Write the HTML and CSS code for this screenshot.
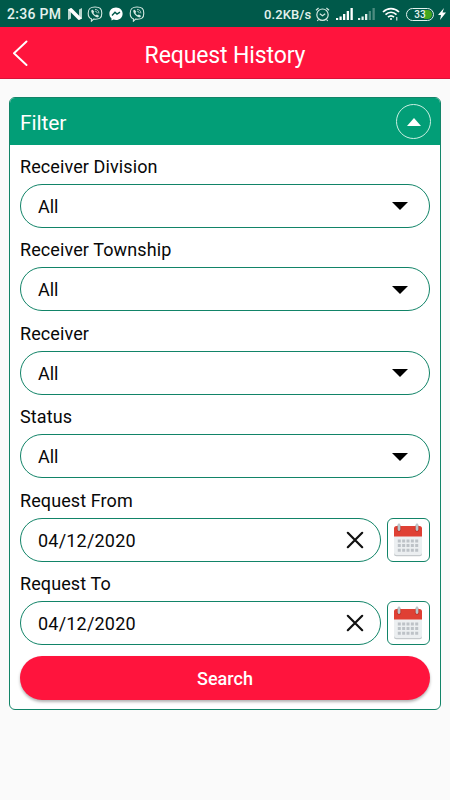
FILE: index.html
```html
<!DOCTYPE html>
<html lang="en">
<head>
<meta charset="utf-8">
<title>Request History</title>
<link rel="stylesheet" href="styles.css">
</head>
<body>
<svg class="defs" width="0" height="0" aria-hidden="true">
  <defs>
    <symbol id="viber" viewBox="0 0 16 16">
      <path d="M8 1C3 1 1.200 2.600 1.200 7.200c0 3.400 1 4.900 3.200 5.600v2.400l2.200-2.100c6.100.5 8.200-1 8.200-5.900C14.800 2.600 13 1 8 1z" fill="none" stroke="#d5e9e2" stroke-width="1.100"/>
      <path d="M4.600 4.100l1.200-.4 1.400 2-.8 1.200c.5 1.200 1.300 2 2.400 2.400l1.100-.9 2 1.400c0 .9-.8 1.600-1.600 1.700C7.300 10.600 4.700 7.900 4.200 5.300z" fill="#d5e9e2"/>
      <path d="M8 3.400c2.300 0 3.900 1.500 3.900 4M8.200 5.200c1.200.1 1.900.8 2 2" fill="none" stroke="#d5e9e2" stroke-width=".8"/>
    </symbol>
    <symbol id="cal" viewBox="0 0 30 34">
      <rect x="1" y="5" width="28" height="28.300" rx="2.500" fill="#c5c9cc"/>
      <rect x="1" y="5" width="28" height="27" rx="2.500" fill="#eceff1"/>
      <path d="M1 13.500V5.500a2.500 2.500 0 0 1 2.500-2.500h23A2.500 2.500 0 0 1 29 5.500v8z" fill="#df4034"/>
      <path d="M6 4.500V6.500M24 4.500V6.500" stroke="#bd3026" stroke-width="4.400" stroke-linecap="round"/>
      <path d="M6 2V6.500M24 2V6.500" stroke="#bcc5c9" stroke-width="2.800" stroke-linecap="round"/>
      <path d="M4.800 18h20.400M4.800 22.600h20.400M4.800 27.200h20.400" stroke="#bdc2c7" stroke-width="3" stroke-dasharray="3 1.350"/>
    </symbol>
    <symbol id="cross" viewBox="0 0 18 18">
      <path d="M1.800 1.800l14.400 14.400M16.200 1.800L1.800 16.200" stroke="#111" stroke-width="2.200" stroke-linecap="round"/>
    </symbol>
    <symbol id="down" viewBox="0 0 16 8"><path d="M0 0h16L8 8z"/></symbol>
  </defs>
</svg>

<header class="status">
  <span class="clock">2:36 PM</span>
  <svg class="n-icon" width="14" height="12" viewBox="0 0 14 12"><path d="M0 1.500L3 0v10.500L0 12zM11 1.500L14 0v10.500L11 12z" fill="#b9d6ce"/><path d="M0 1.500L3.500 0 14 10.500 10.500 12z" fill="#fff"/></svg>
  <svg class="viber-a" width="16" height="16"><use href="#viber"/></svg>
  <svg class="chat" width="14" height="14" viewBox="0 0 14 14"><path d="M7 .4C3 .4.400 3.200.400 6.700c0 2 .8 3.600 2.100 4.700v2.200l2-1c.8.3 1.600.4 2.500.4 4 0 6.600-2.800 6.600-6.300S11 .4 7 .4z" fill="#fff"/><path d="M3 8.500l3-3.200 2 1.800 3-1.900" fill="none" stroke="#00594a" stroke-width="1.400"/></svg>
  <svg class="viber-b" width="16" height="16"><use href="#viber"/></svg>
  <span class="rate">0.2KB/s</span>
  <svg class="alarm" width="15" height="15" viewBox="0 0 15 15" fill="none" stroke="#d5e9e2" stroke-width="1.200"><circle cx="7.500" cy="7.700" r="5.700"/><path d="M1 3.300L3.600 1M14 3.300L11.400 1M3.500 12.500L2.300 14M11.500 12.500l1.200 1.500M4.800 6.700l2.700 2 2.700-2"/></svg>
  <svg class="signal" width="17" height="12" viewBox="0 0 17 12" fill="#fff"><path d="M0 10h2.200v2H0zM3.500 8.500h2.200V12H3.500zM7 6h2.300v6H7zM10.700 3H13v9h-2.300zM14.500 0h2.300v12h-2.300z"/></svg>
  <svg class="signal-b" width="17" height="12" viewBox="0 0 17 12" fill="#e4f2ee"><path d="M0 10h2.200v2H0zM3.500 8.500h2.200V12H3.500zM7 6h2.300v6H7z"/><path d="M10.700 3H13v9h-2.300zM14.500 0h2.300v12h-2.300z" fill="#4d8c80"/></svg>
  <svg class="wifi" width="18" height="14" viewBox="0 0 18 14" fill="none" stroke="#fff" stroke-width="1.700"><path d="M1 5c4.700-4.600 11.300-4.600 16 0M3.500 7.700c3.300-3.200 7.700-3.200 11 0M6 10.200c1.900-1.800 4.100-1.800 6 0"/><circle cx="9" cy="12" r="1" fill="#fff" stroke="none"/><path d="M14.800 10v3.500" stroke-width="1"/></svg>
  <span class="battery">33</span>
  <svg class="bolt" width="8" height="12" viewBox="0 0 8 12"><path d="M6 0L0 7h3L2 12l6-7.500H4.500z" fill="#fff"/></svg>
</header>

<nav class="bar">
  <svg class="back" width="16" height="27" viewBox="0 0 16 27"><path d="M13.500 1.500L1 13.300 13.500 25" fill="none" stroke="#fff" stroke-width="1.900" stroke-linecap="round" stroke-linejoin="round"/></svg>
  <h1>Request History</h1>
</nav>

<main class="card">
  <div class="card-head">
    <h2>Filter</h2>
    <span class="toggle"><svg width="14" height="8" viewBox="0 0 14 8"><path d="M0 8L7 0l7 8z" fill="#fff"/></svg></span>
  </div>
  <form class="fields">
    <div class="group"><label>Receiver Division</label><div class="pill select"><span>All</span><svg width="16" height="8"><use href="#down"/></svg></div></div>
    <div class="group"><label>Receiver Township</label><div class="pill select"><span>All</span><svg width="16" height="8"><use href="#down"/></svg></div></div>
    <div class="group"><label>Receiver</label><div class="pill select"><span>All</span><svg width="16" height="8"><use href="#down"/></svg></div></div>
    <div class="group"><label>Status</label><div class="pill select"><span>All</span><svg width="16" height="8"><use href="#down"/></svg></div></div>
    <div class="group"><label>Request From</label><div class="row"><div class="pill date"><span>04/12/2020</span><svg width="18" height="18"><use href="#cross"/></svg></div><div class="cal"><svg width="30" height="34"><use href="#cal"/></svg></div></div></div>
    <div class="group"><label>Request To</label><div class="row"><div class="pill date"><span>04/12/2020</span><svg width="18" height="18"><use href="#cross"/></svg></div><div class="cal"><svg width="30" height="34"><use href="#cal"/></svg></div></div></div>
    <button class="search" type="button">Search</button>
  </form>
</main>
</body>
</html>
```
FILE: styles.css
```css
* { box-sizing: border-box; }
body {
  margin: 0;
  height: 800px;
  overflow: hidden;
  background: #fafafa;
  color: #080808;
  font-family: Roboto, "Liberation Sans", sans-serif;
}
svg { display: block; flex: none; }
.defs { position: absolute; }

.status {
  display: flex;
  align-items: center;
  height: 27px;
  padding: 1px 4px 0 7px;
  background: #00594a;
  color: #e4f2ee;
  font-weight: 500;
  white-space: nowrap;
}
.clock { width: 61px; font-size: 14px; letter-spacing: .3px; }
.viber-a { margin-left: 5px; }
.chat { margin-left: 6px; }
.viber-b { margin-left: 6px; }
.rate { margin-left: auto; width: 49px; font-size: 13px; letter-spacing: .1px; }
.alarm { margin-left: 2px; }
.signal { margin-left: 6px; }
.signal-b { margin-left: 5px; }
.wifi { margin-left: 7px; }
.battery {
  width: 28px;
  height: 13px;
  margin: 0 4px 0 6px;
  border: 1px solid #e4f2ee;
  border-radius: 7px;
  background: linear-gradient(90deg, transparent 66%, #43a51c 66%) content-box;
  padding: 1px;
  font-size: 10px;
  line-height: 9px;
  text-align: center;
}

.bar {
  position: relative;
  display: flex;
  align-items: center;
  justify-content: center;
  height: 52px;
  background: #ff143d;
  color: #fff;
  border-bottom: 1px solid #d81238;
}
.back { position: absolute; left: 13px; top: 13px; }
h1 { margin: 6px 0 0; font-size: 23px; font-weight: 400; line-height: 28px; letter-spacing: -.12px; }

.card {
  width: 432px;
  height: 613px;
  margin: 18px 9px 0;
  border: 1px solid #128468;
  border-radius: 6px;
  background: #fff;
  overflow: hidden;
}
.card-head {
  display: flex;
  align-items: center;
  justify-content: space-between;
  height: 46.600px;
  padding: 0 9px 0 10px;
  background: #029e77;
  color: #fff;
}
h2 { margin: 3px 0 0; font-size: 21px; font-weight: 400; letter-spacing: -.1px; }
.toggle {
  display: flex;
  align-items: center;
  justify-content: center;
  width: 35px;
  height: 35px;
  margin-top: 1px;
  border: 1.300px solid #c9f0e2;
  border-radius: 50%;
}
.fields { padding: 0 10px; }
.group { height: 83.400px; padding-top: 10.400px; }
label { display: block; height: 29px; font-size: 18px; line-height: 24px; letter-spacing: .1px; }
.pill {
  display: flex;
  align-items: center;
  justify-content: space-between;
  flex: 1;
  height: 44px;
  border: 1px solid #128468;
  border-radius: 22px;
  padding: 1px 21px 0 17px;
  font-size: 18px;
}
.row { display: flex; gap: 6px; }
.date { padding-right: 15.500px; letter-spacing: .2px; }
.cal {
  display: flex;
  align-items: center;
  justify-content: center;
  width: 43.500px;
  height: 44px;
  border: 1px solid #128468;
  border-radius: 6px;
}
.search {
  display: block;
  width: 100%;
  height: 44px;
  margin-top: 11px;
  padding: 2px 0 0;
  border: 0;
  border-radius: 22px;
  background: #ff143d;
  box-shadow: 0 2px 3px rgba(0, 0, 0, .3);
  color: #fff;
  font: 500 18px Roboto, "Liberation Sans", sans-serif;
}
```
